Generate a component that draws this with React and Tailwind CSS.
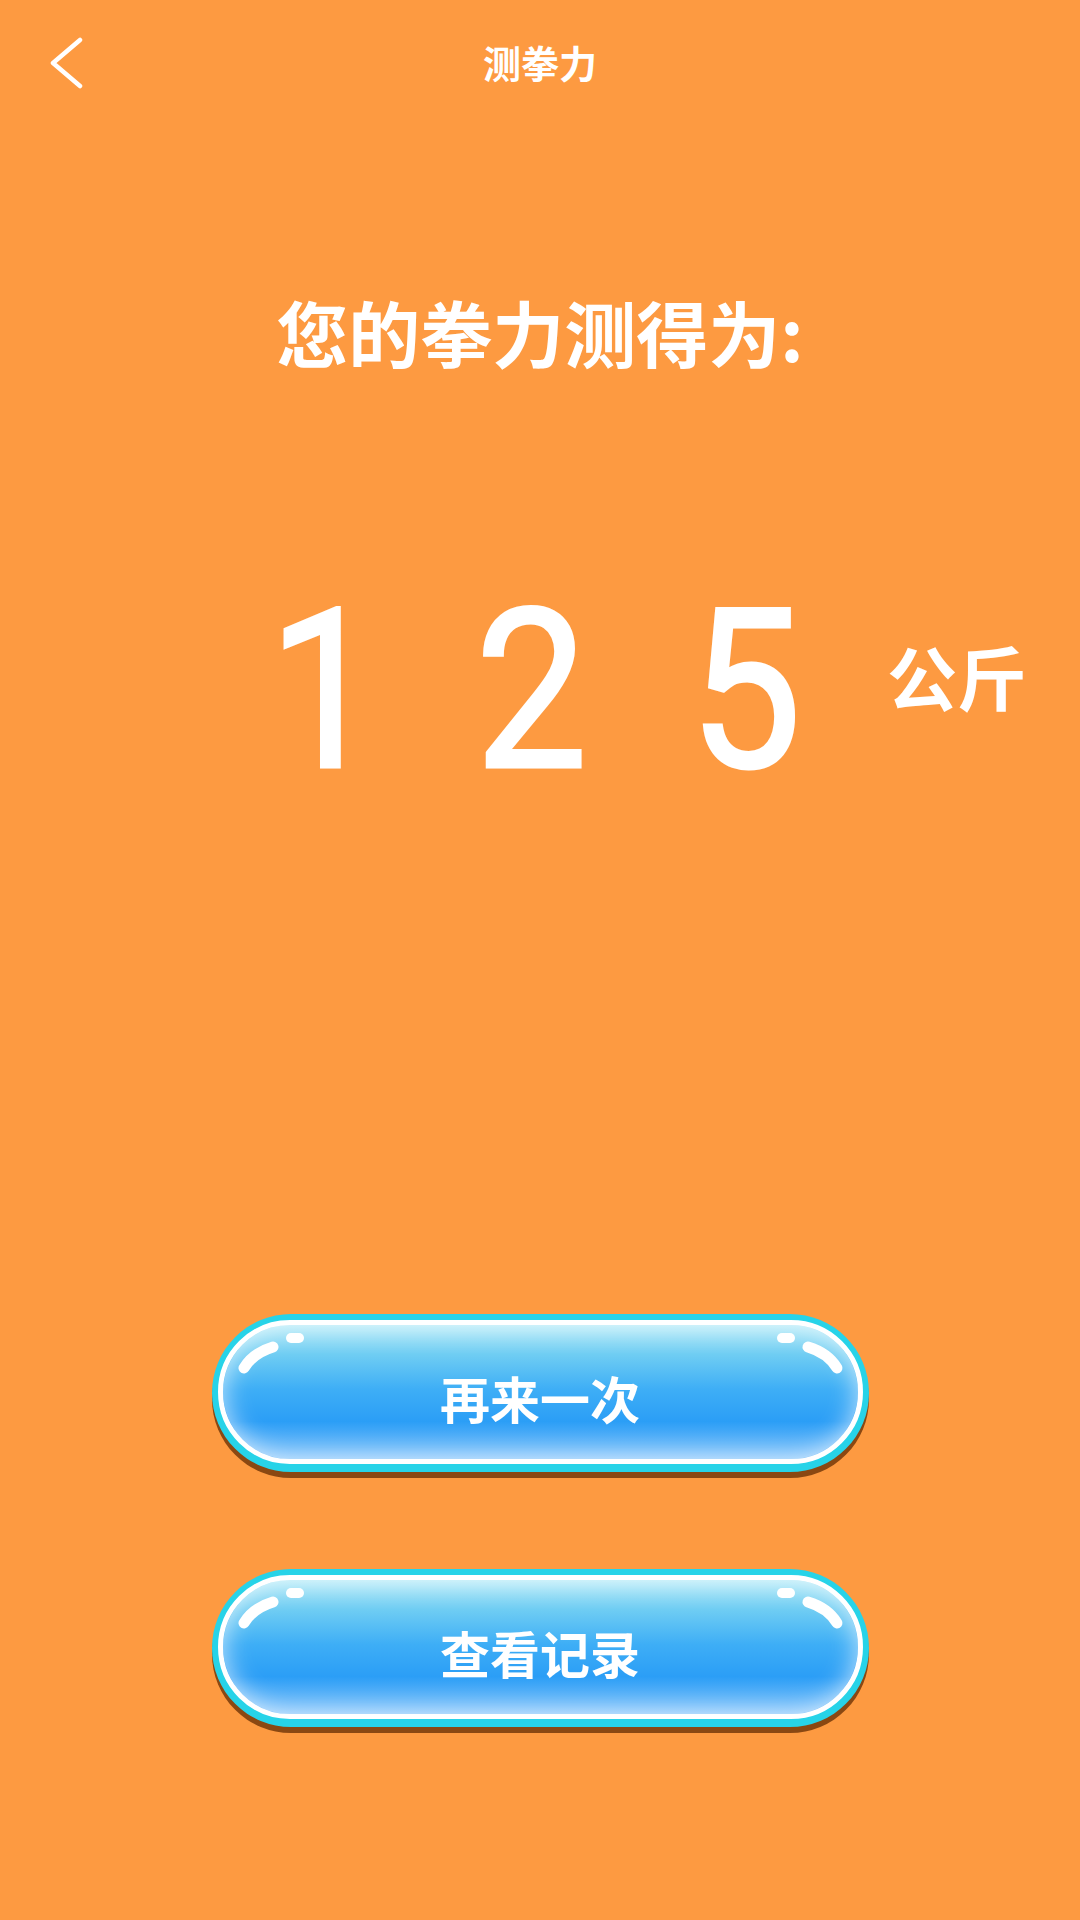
import React from 'react';

const CJK = { fontFamily: '"Noto Sans CJK SC", "Noto Sans", sans-serif' };

// glossy pill button
const GlossyButton = ({ label }) => {
  return (
    <button className="relative mx-auto block w-[657px] h-[158px] rounded-full bg-[#27d3e8] p-[6px] pb-[8px] shadow-[0_6px_0_#8a4812]">
      <div className="relative flex h-full w-full items-center justify-center rounded-full border-[5px] border-white bg-[linear-gradient(180deg,#b3eaf8_0%,#6fcdf3_22%,#3eaef6_48%,#2b9ef6_72%,#86c5fb_100%)] shadow-[inset_0_0_26px_rgba(255,255,255,0.7)]">
        <svg className="absolute inset-0" width="635" height="134" viewBox="0 0 635 134">
          <rect x="63" y="8" width="18" height="10" rx="5" fill="#fff" />
          <path d="M21 43 Q30 28 50 22" stroke="#fff" strokeWidth="11" strokeLinecap="round" fill="none" />
          <rect x="554" y="8" width="18" height="10" rx="5" fill="#fff" />
          <path d="M614 43 Q605 28 585 22" stroke="#fff" strokeWidth="11" strokeLinecap="round" fill="none" />
        </svg>
        <span className="relative pt-[10px] text-[50px] font-bold leading-none text-white" style={CJK}>
          {label}
        </span>
      </div>
    </button>
  );
};

const digits = [
  { d: '1', cls: 'pl-[20px]' },
  { d: '2', cls: 'pl-[2px]' },
  { d: '5', cls: 'pl-0' },
];

export default function App() {
  return (
    <div className="flex h-[1920px] w-[1080px] flex-col overflow-hidden bg-[#fd9a41]" style={CJK}>
      {/* Header */}
      <div className="grid h-[128px] grid-cols-[1fr_auto_1fr]">
        <div className="pl-[50px] pt-[37px]">
          <svg width="34" height="52" viewBox="0 0 34 52">
            <path d="M30 3 L3 26 L30 49" stroke="#fff" strokeWidth="4.5" strokeLinecap="round" strokeLinejoin="round" fill="none" />
          </svg>
        </div>
        <div className="pt-[43px] text-[38px] font-bold leading-none text-white">测拳力</div>
        <div />
      </div>

      {/* Result heading */}
      <div className="mt-[167px] text-center text-[72px] font-bold leading-none text-white">
        您的拳力测得为:
      </div>

      {/* Value */}
      <div className="mt-[213px] flex items-start pl-[208px]">
        {digits.map(({ d, cls }) => (
          <span
            key={d}
            className={`w-[215px] ${cls} scale-x-90 text-center text-[222px] font-normal leading-none text-white [-webkit-text-stroke:3px_white]`}
            style={{ fontFamily: 'Roboto, "Liberation Sans", sans-serif' }}
          >
            {d}
          </span>
        ))}
        <span className="ml-[34px] mt-[61px] text-[70px] font-bold leading-none text-white">公斤</span>
      </div>

      {/* Actions */}
      <div className="mt-[512px]">
        <GlossyButton label="再来一次" />
      </div>
      <div className="mt-[97px]">
        <GlossyButton label="查看记录" />
      </div>
    </div>
  );
}
